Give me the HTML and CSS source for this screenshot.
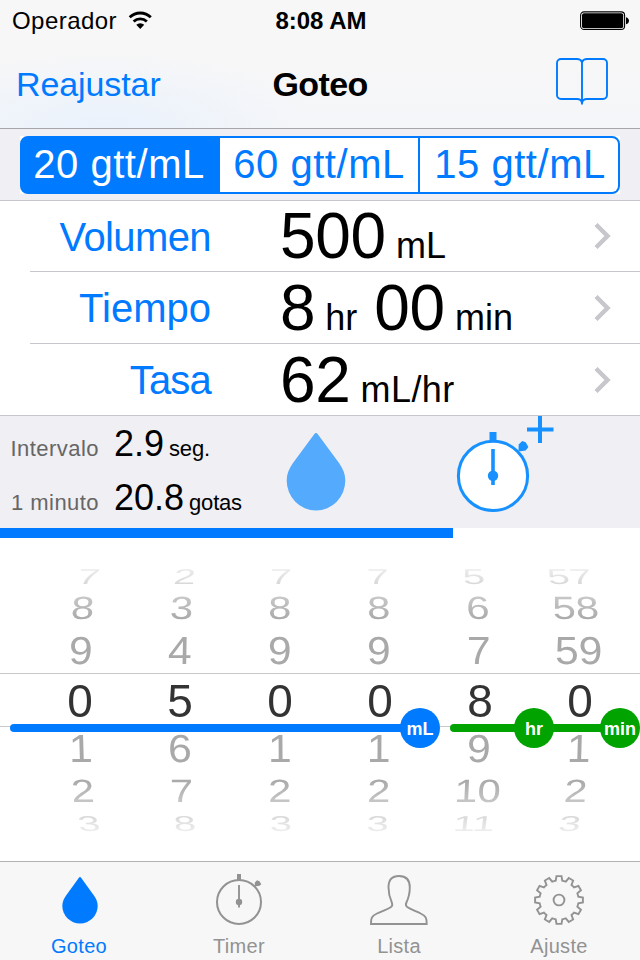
FILE: index.html
```html
<!DOCTYPE html>
<html lang="es">
<head>
  <meta charset="UTF-8" />
  <meta name="viewport" content="width=device-width, initial-scale=1.0" />
  <title>Goteo</title>
  <link rel="stylesheet" href="styles.css">
</head>
<body>
  <header class="top">
    <div class="status">
      <div class="carrier">
        <span>Operador</span>
        <svg class="wifi" width="24.500" height="19" viewBox="0 0 26 20">
          <path d="M1.8 6.6a16 16 0 0 1 22.4 0" fill="none" stroke="#000" stroke-width="3"/>
          <path d="M6 11.1a10 10 0 0 1 14 0" fill="none" stroke="#000" stroke-width="3"/>
          <path d="M13 19l-4.2-4.4a6 6 0 0 1 8.4 0z"/>
        </svg>
      </div>
      <div class="clock">8:08 AM</div>
      <svg class="battery" width="50" height="20" viewBox="0 0 50 20">
        <rect x=".6" y=".9" width="44" height="17.6" rx="3.5" fill="#fff" stroke="#000" stroke-width="1.1"/>
        <rect x="2" y="2.2" width="41.2" height="15" rx="2" />
        <path d="M46 6.2c4 1 4 6 0 7z"/>
      </svg>
    </div>
    <nav class="nav">
      <a class="nav-link">Reajustar</a>
      <h1>Goteo</h1>
      <svg class="book" width="54" height="50" viewBox="0 0 54 50">
        <path d="M27 47.500V5c-1-2.300-2.500-3-5-3H6a4 4 0 0 0-4 4v32a4 4 0 0 0 4 4h16c3 0 4.500 1 5 4 .5-3 2-4 5-4h16a4 4 0 0 0 4-4V6a4 4 0 0 0-4-4H32c-2.500 0-4 .700-5 3" fill="none" stroke="#007aff" stroke-width="1.900"/>
      </svg>
    </nav>
  </header>

  <div class="segment-bar">
    <div class="segment-back">
      <div class="segments">
        <button class="segment active">20 gtt/mL</button>
        <button class="segment">60 gtt/mL</button>
        <button class="segment last">15 gtt/mL</button>
      </div>
    </div>
  </div>

  <div class="rows">
    <div class="row">
      <div class="row-label volume">Volumen</div>
      <div class="row-value"><b>500</b><span>mL</span></div>
      <svg class="chevron" width="18" height="28" viewBox="0 0 18 28"><path d="M2 2.500L13.500 14 2 25.500"/></svg>
    </div>
    <div class="row">
      <div class="row-label">Tiempo</div>
      <div class="row-value"><b>8</b><span>hr</span><b class="minutes">00</b><span>min</span></div>
      <svg class="chevron" width="18" height="28" viewBox="0 0 18 28"><path d="M2 2.500L13.500 14 2 25.500"/></svg>
    </div>
    <div class="row">
      <div class="row-label rate">Tasa</div>
      <div class="row-value"><b>62</b><span class="per-hour">mL/hr</span></div>
      <svg class="chevron" width="18" height="28" viewBox="0 0 18 28"><path d="M2 2.500L13.500 14 2 25.500"/></svg>
    </div>
  </div>

  <section class="info">
    <div class="stats">
      <div class="stat"><span class="stat-label">Intervalo</span><b>2.9</b><span class="unit">seg.</span></div>
      <div class="stat"><span class="stat-label">1 minuto</span><b>20.8</b><span class="unit">gotas</span></div>
    </div>
    <svg class="big-drop" width="60" height="79" viewBox="0 0 60 79">
      <path d="M30 1c.8 0 1.300.6 1.800 1.300L53 31c4 5.500 6.300 11 6.300 17.500a29.300 30 0 0 1-58.600 0C.7 42 3 36.500 7 31L28.200 2.300C28.700 1.600 29.200 1 30 1z" fill="#54aafd"/>
    </svg>
    <svg class="big-timer" width="98" height="98" viewBox="0 0 98 98">
      <g stroke="#1791ff" fill="none">
        <circle cx="37" cy="59.900" r="34.600" fill="#fff" stroke-width="3"/>
        <path d="M37 16v9" stroke-width="7"/>
        <path d="M37 33v36" stroke-width="3.600"/>
        <path d="M84 0v27M71 13.500h26.500" stroke-width="4"/>
      </g>
      <circle cx="37" cy="59.700" r="5.200" fill="#1791ff"/>
      <path d="M62.500 34.500l.2-6 3.500-3.500 3.500 1.200 2.700 4.800-2.700 3.400-5.200.8z" fill="#1791ff"/>
    </svg>
  </section>

  <div class="progress"><div class="progress-fill"></div></div>

  <section class="picker">
    <div class="wheel">
      <div class="line far up"><i>7</i><i>2</i><i>7</i><i>7</i><i>5</i><i>57</i></div>
      <div class="line mid up"><i>8</i><i>3</i><i>8</i><i>8</i><i>6</i><i>58</i></div>
      <div class="line near up"><i>9</i><i>4</i><i>9</i><i>9</i><i>7</i><i>59</i></div>
      <div class="line selected"><i>0</i><i>5</i><i>0</i><i>0</i><i>8</i><i>0</i></div>
      <div class="line near down"><i>1</i><i>6</i><i>1</i><i>1</i><i>9</i><i>1</i></div>
      <div class="line mid down"><i>2</i><i>7</i><i>2</i><i>2</i><i>10</i><i>2</i></div>
      <div class="line far down"><i>3</i><i>8</i><i>3</i><i>3</i><i>11</i><i>3</i></div>
    </div>
    <!-- unit bars lie over the wheel -->
    <div class="bar volume-bar"></div>
    <div class="bar time-bar"></div>
    <div class="knob ml">mL</div>
    <div class="knob hr">hr</div>
    <div class="knob min">min</div>
  </section>

  <footer class="tabs">
    <a class="tab active">
      <svg width="60" height="54" viewBox="0 0 60 54">
        <path d="M31 4c.5 0 .8.400 1.100.8L44.900 22.500c2.400 3.400 3.800 6.700 3.800 10.300a17.700 17.700 0 0 1-35.400 0c0-3.600 1.400-6.900 3.800-10.300L29.900 4.800c.3-.4.600-.8 1.100-.8z" fill="#007aff"/>
      </svg>
      <span>Goteo</span>
    </a>
    <a class="tab">
      <svg width="60" height="54" viewBox="0 0 60 54">
        <g fill="none" stroke="#929292">
          <circle cx="30" cy="29" r="22" stroke-width="2"/>
          <path d="M30 1v6" stroke-width="4"/>
          <path d="M30 12v22.500" stroke-width="1.900"/>
        </g>
        <circle cx="30" cy="29" r="3.200" fill="#929292"/>
        <path d="M45.700 13.500l.2-4L48 7.300l2.500.9 1.800 3-1.700 1.500z" fill="#929292"/>
      </svg>
      <span>Timer</span>
    </a>
    <a class="tab">
      <svg width="60" height="54" viewBox="0 0 60 54">
        <path d="M2 51c-.2-5.500.5-8 6-10.500 5-2.300 10-3.700 14-6.500 1.700-1.200 1.600-2.500.8-4.500-2-4.500-3.300-9-3.300-15C19.500 7 23 3 30 3s10.800 4 10.800 11.500c0 6-1.200 10.500-3.400 15-.9 2-1 3.300.8 4.500 4 2.800 9 4.200 13.500 6.500 5.300 2.500 6.200 5 6 10.500z" fill="none" stroke="#929292" stroke-width="1.900"/>
      </svg>
      <span>Lista</span>
    </a>
    <a class="tab">
      <svg width="60" height="54" viewBox="0 0 60 54">
        <defs>
          <path id="tooth" d="M-5.100-18.900L-3.300-19.300-2.500-23.900H2.500L3.300-19.300 5.100-18.900"/>
        </defs>
        <g transform="translate(30 27)" fill="none" stroke="#929292" stroke-width="1.900">
          <use href="#tooth"/>
          <use href="#tooth" transform="rotate(30)"/>
          <use href="#tooth" transform="rotate(60)"/>
          <use href="#tooth" transform="rotate(90)"/>
          <use href="#tooth" transform="rotate(120)"/>
          <use href="#tooth" transform="rotate(150)"/>
          <use href="#tooth" transform="rotate(180)"/>
          <use href="#tooth" transform="rotate(210)"/>
          <use href="#tooth" transform="rotate(240)"/>
          <use href="#tooth" transform="rotate(270)"/>
          <use href="#tooth" transform="rotate(300)"/>
          <use href="#tooth" transform="rotate(330)"/>
          <circle r="5.400"/>
        </g>
      </svg>
      <span>Ajuste</span>
    </a>
  </footer>
</body>
</html>
```
FILE: styles.css
```css
:root {
  --blue: #007aff;
  --green: #00a300;
  --panel: #efeff4;
  --bar: #f7f7f7;
  --line: #c8c7cc;
  --grey: #929292;
}

* {
  box-sizing: border-box;
  margin: 0;
  padding: 0;
}

body {
  width: 640px;
  height: 960px;
  overflow: hidden;
  background: #fff;
  color: #000;
  font-family: "Liberation Sans", Arial, sans-serif;
  display: flex;
  flex-direction: column;
}

b {
  font-weight: 400;
}

svg {
  display: block;
  flex: none;
}

/* status + navigation */
.top {
  height: 129px;
  border-bottom: 1px solid #a7a7aa;
  background: radial-gradient(ellipse 210px 75px at 105px 128px, #eaf2fc, rgba(234, 242, 252, 0)), linear-gradient(#f7f7f7 40px, #f5f6f9);
}

.status {
  height: 40px;
  padding: 1px 10px 0 12px;
  display: grid;
  grid-template-columns: 1fr auto 1fr;
  align-items: center;
  font-size: 24px;
}

.carrier {
  display: flex;
  align-items: center;
  gap: 11px;
  letter-spacing: 0.45px;
}

.clock {
  font-weight: 700;
  letter-spacing: 0;
}

.battery {
  justify-self: end;
}

.nav {
  height: 88px;
  padding: 0 31px 0 16px;
  display: grid;
  grid-template-columns: 1fr auto 1fr;
  align-items: center;
  font-size: 34px;
}

.nav-link {
  color: var(--blue);
  letter-spacing: -0.1px;
}

.nav h1 {
  font-size: 34px;
  letter-spacing: -0.6px;
  margin-left: 15px;
}

.book {
  justify-self: end;
  margin-top: -5px;
}

/* drop factor */
.segment-bar {
  height: 71px;
  padding: 7px 20px 0;
  background: var(--panel);
}

.segment-back {
  background: #fff;
}

.segments {
  height: 58px;
  display: flex;
  border: 2px solid var(--blue);
  border-radius: 8px;
  background: var(--blue);
  overflow: hidden;
}

.segment {
  width: 198px;
  height: 54px;
  padding-bottom: 2px;
  border: none;
  background: #fff;
  color: var(--blue);
  font: 40px/50px "Liberation Sans", Arial, sans-serif;
  letter-spacing: 0.55px;
  white-space: nowrap;
}

.segment.active {
  padding-right: 4px;
  background: var(--blue);
  color: #fff;
}

.segment.last {
  width: 200px;
  padding-left: 2px;
  border-left: 2px solid var(--blue);
}

/* values */
.rows {
  border-top: 1px solid var(--line);
  border-bottom: 1px solid var(--line);
}

.row {
  height: 72px;
  margin-left: 30px;
  padding-right: 28px;
  display: flex;
  align-items: center;
  border-bottom: 1px solid var(--line);
}

.row:first-child {
  height: 71px;
}

.row:last-child {
  height: 71px;
  border-bottom: none;
}

.row-label {
  width: 181px;
  padding-top: 2px;
  text-align: right;
  color: var(--blue);
  font-size: 40px;
}

.volume {
  letter-spacing: -0.6px;
}

.rate {
  letter-spacing: -0.8px;
}

.row-value {
  flex: 1;
  margin-left: 69px;
  padding-top: 10px;
  display: flex;
  align-items: baseline;
  gap: 10px;
  line-height: 68px;
}

.row-value b {
  font-size: 64px;
  letter-spacing: -0.3px;
}

.row-value span {
  font-size: 36px;
}

.row-value .minutes {
  margin-left: 7px;
}

.row-value .per-hour {
  letter-spacing: 0.4px;
}

.chevron path {
  fill: none;
  stroke: #c7c7cc;
  stroke-width: 4.5;
}

/* drip info */
.info {
  height: 112px;
  display: flex;
  background: var(--panel);
}

.stats {
  width: 286px;
  padding-top: 1px;
}

.stat {
  height: 54px;
  display: flex;
  align-items: baseline;
  line-height: 54px;
}

.stat-label {
  width: 99px;
  text-align: right;
  color: #666;
  font-size: 22px;
  letter-spacing: 0.45px;
}

.stat b {
  margin-left: 15px;
  font-size: 36px;
}

.unit {
  margin-left: 5px;
  font-size: 22px;
  letter-spacing: -0.2px;
}

.big-drop {
  margin-top: 16px;
}

.big-timer {
  margin-left: 110px;
}

.progress {
  height: 10px;
}

.progress-fill {
  width: 453px;
  height: 10px;
  background: var(--blue);
}

/* picker */
.picker {
  position: relative;
  height: 323px;
  overflow: hidden;
}

.wheel {
  padding-top: 28px;
  -webkit-mask-image: linear-gradient(transparent 17px, #000 82px, #000 242px, transparent 307px);
  mask-image: linear-gradient(transparent 17px, #000 82px, #000 242px, transparent 307px);
}

.line {
  --lean: 0deg;
  --sx: 1;
  --sy: 1;
  display: grid;
  grid-template-columns: repeat(6, 100px);
  align-items: center;
  justify-items: center;
  font-size: 46px;
  color: #a9a9a9;
}

.line i {
  --side: 1;
  font-style: normal;
  line-height: 1;
  margin: -20px 0;
  transform: scale(var(--sx), var(--sy)) skewX(calc(var(--lean) * var(--side)));
}

.line i:nth-child(2) { --side: 0.6; }
.line i:nth-child(3) { --side: 0.2; }
.line i:nth-child(4) { --side: -0.2; }
.line i:nth-child(5) { --side: -0.6; }
.line i:nth-child(6) { --side: -1; }

.selected {
  height: 54px;
  padding-top: 2px;
  padding-left: 30px;
  border-top: 1px solid #c8c8c8;
  border-bottom: 1px solid #c8c8c8;
  color: #333;
}

.near {
  --sx: 0.93;
  --sy: 0.85;
  height: 45px;
  padding-left: 30.7px;
  grid-template-columns: repeat(6, 99.6px);
}

.mid {
  --sx: 0.91;
  --sy: 0.7;
  height: 41px;
  padding-left: 33.7px;
  grid-template-columns: repeat(6, 98.6px);
}

.far {
  --sx: 0.87;
  --sy: 0.47;
  height: 21px;
  padding-left: 40.8px;
  grid-template-columns: repeat(6, 96.2px);
}

.near.up { --lean: -1.5deg; padding-bottom: 2px; }
.mid.up { --lean: -3.5deg; }
.far.up { --lean: -6deg; padding-bottom: 2px; }
.near.down { --lean: 1.5deg; height: 42px; }
.mid.down { --lean: 3.5deg; height: 43px; }
.far.down { --lean: 6deg; }

.bar {
  position: absolute;
  top: 186px;
  height: 8px;
  border-radius: 4px;
}

.volume-bar {
  left: 10px;
  width: 410px;
  background: var(--blue);
}

.time-bar {
  left: 450px;
  width: 170px;
  background: var(--green);
}

.knob {
  position: absolute;
  top: 170px;
  width: 40px;
  height: 40px;
  border-radius: 50%;
  background: var(--green);
  color: #fff;
  font-size: 18px;
  font-weight: 700;
  line-height: 43px;
  text-align: center;
}

.ml {
  left: 400px;
  background: var(--blue);
}

.hr {
  left: 514px;
}

.min {
  left: 600px;
}

/* tab bar */
.tabs {
  height: 99px;
  padding-top: 11px;
  display: flex;
  border-top: 1px solid #b2b2b2;
  background: var(--bar);
}

.tab {
  flex: 1;
  display: flex;
  flex-direction: column;
  align-items: center;
  color: var(--grey);
  font-size: 20px;
  line-height: 23px;
  letter-spacing: 0.3px;
}

.tab svg {
  margin-right: 2px;
}

.tab span {
  margin-top: 8px;
  margin-right: 2px;
}

.tab.active {
  color: var(--blue);
}
```
